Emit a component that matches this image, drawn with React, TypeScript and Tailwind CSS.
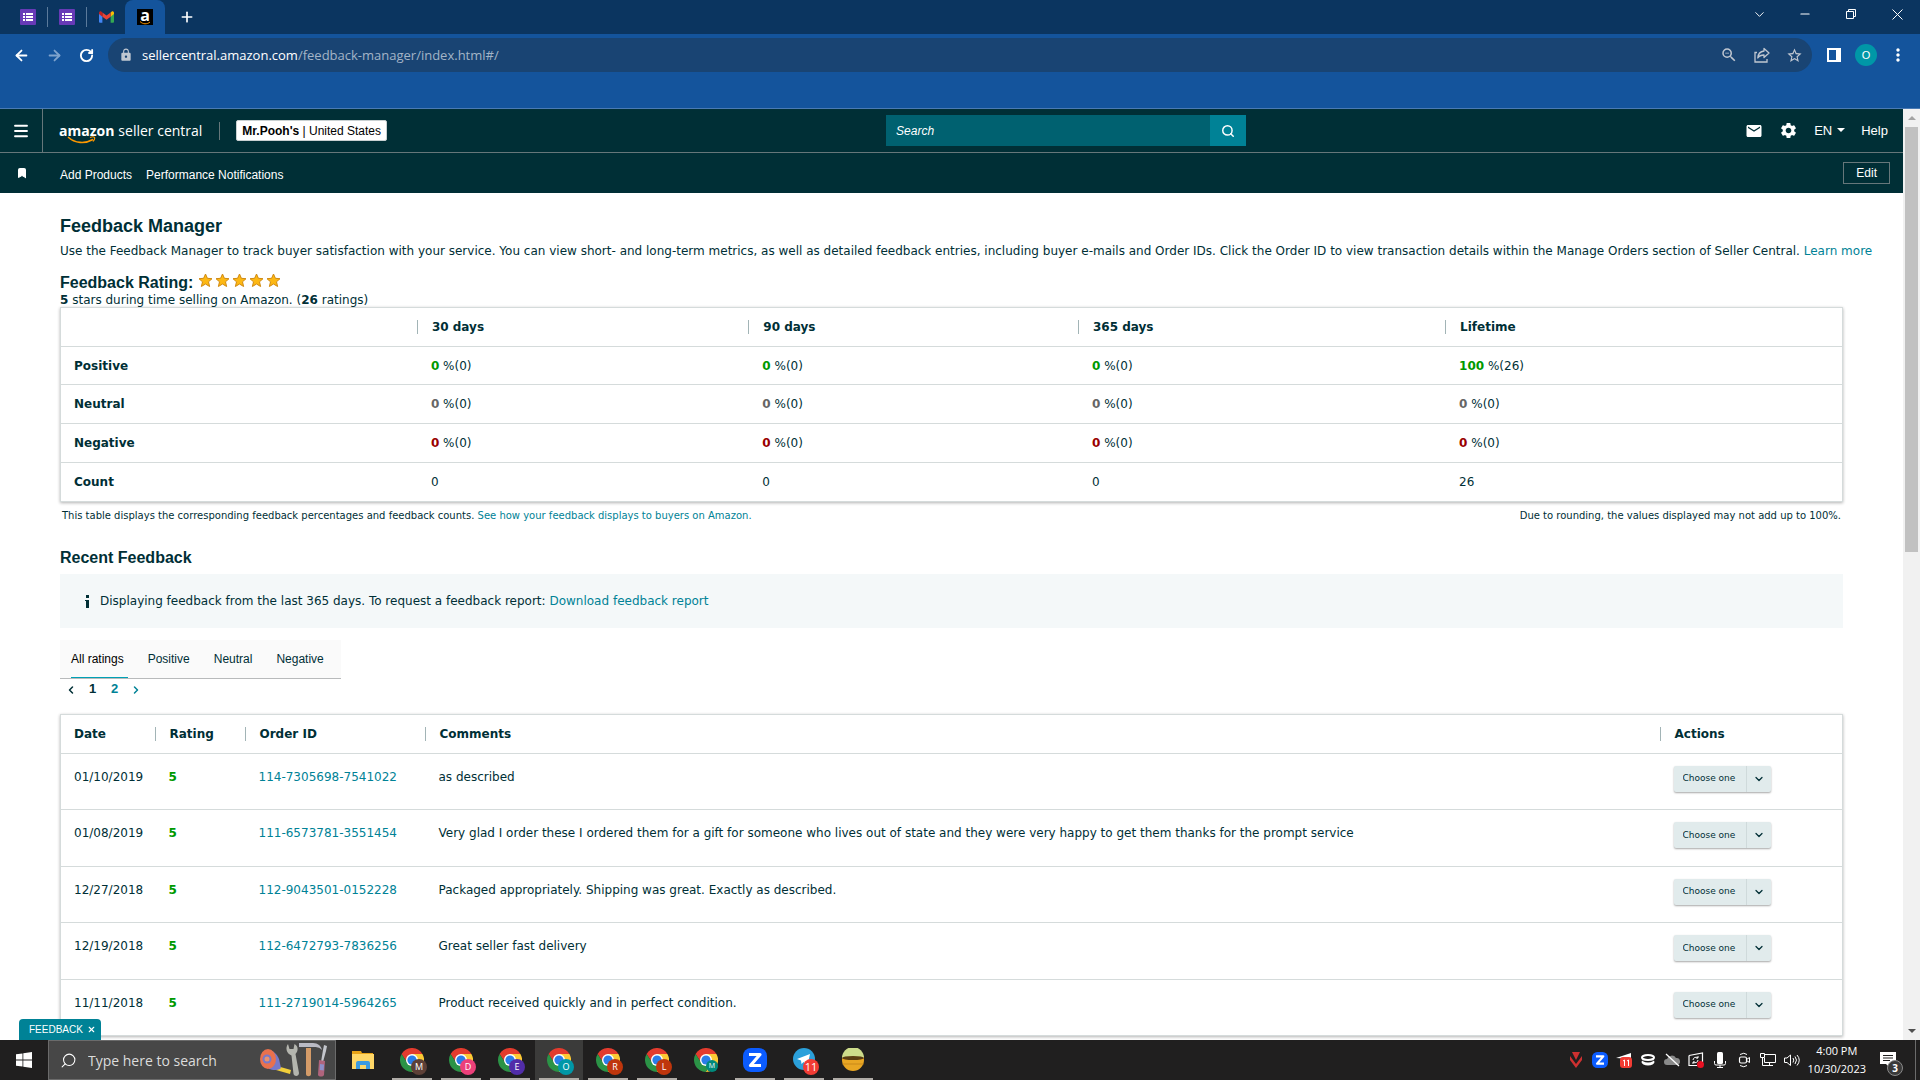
import { useState, type ReactNode } from "react";
import {
  ArrowLeft,
  ArrowRight,
  Bookmark,
  ChevronDown,
  ChevronLeft,
  ChevronRight,
  Menu,
  Minus,
  Plus,
  RotateCw,
  Search,
  X,
} from "lucide-react";
import { MdEmail, MdLock, MdMoreVert, MdSettings, MdStarBorder, MdZoomOut } from "react-icons/md";

interface RatingRow {
  label: string;
  color: string;
  values: [string, string][];
}

const PERIODS = ["30 days", "90 days", "365 days", "Lifetime"];

const RATING_ROWS: RatingRow[] = [
  {
    label: "Positive",
    color: "text-[#009900]",
    values: [["0", "0"], ["0", "0"], ["0", "0"], ["100", "26"]],
  },
  {
    label: "Neutral",
    color: "text-[#666666]",
    values: [["0", "0"], ["0", "0"], ["0", "0"], ["0", "0"]],
  },
  {
    label: "Negative",
    color: "text-[#990000]",
    values: [["0", "0"], ["0", "0"], ["0", "0"], ["0", "0"]],
  },
];

const COUNTS = ["0", "0", "0", "26"];

const FEEDBACK = [
  { date: "01/10/2019", rating: 5, order: "114-7305698-7541022", comment: "as described" },
  {
    date: "01/08/2019",
    rating: 5,
    order: "111-6573781-3551454",
    comment:
      "Very glad I order these I ordered them for a gift for someone who lives out of state and they were very happy to get them thanks for the prompt service",
  },
  {
    date: "12/27/2018",
    rating: 5,
    order: "112-9043501-0152228",
    comment: "Packaged appropriately. Shipping was great. Exactly as described.",
  },
  { date: "12/19/2018", rating: 5, order: "112-6472793-7836256", comment: "Great seller fast delivery" },
  {
    date: "11/11/2018",
    rating: 5,
    order: "111-2719014-5964265",
    comment: "Product received quickly and in perfect condition.",
  },
];

const TABS = ["All ratings", "Positive", "Neutral", "Negative"];

const PROFILES = [
  { letter: "M", color: "bg-[#5d4037]" },
  { letter: "D", color: "bg-[#ec407a]" },
  { letter: "E", color: "bg-[#512da8]" },
  { letter: "O", color: "bg-[#0097a7]", active: true },
  { letter: "R", color: "bg-[#bf360c]" },
  { letter: "L", color: "bg-[#bf360c]" },
];

export default function App() {
  return (
    <div className="flex h-screen flex-col overflow-hidden bg-white font-['Liberation_Sans',Arial,sans-serif] text-[#002f36]">
      <TabStrip />
      <Toolbar />
      <div className="flex min-h-0 flex-1">
        <div className="relative flex min-w-0 flex-1 flex-col">
          <SellerHeader />
          <main className="min-h-0 flex-1 overflow-hidden px-[60px] pt-[21px] font-['DejaVu_Sans',Verdana,sans-serif] text-xs">
            <FeedbackSummary />
            <RecentFeedback />
          </main>
          <div className="absolute bottom-0 left-[19px] flex h-[21px] w-[82px] items-center justify-between rounded-t-[4px] bg-[#008296] pl-[10px] pr-[5px] text-[10px] text-white">
            <button>FEEDBACK</button>
            <button aria-label="Close">
              <X size={9} strokeWidth={3} />
            </button>
          </div>
        </div>
        <Scrollbar />
      </div>
      <Taskbar />
    </div>
  );
}

/* Browser chrome */

function TabStrip() {
  return (
    <div className="flex h-[34px] shrink-0 bg-[#0b3560] text-white">
      <div className="flex items-center pl-5">
        <FormsIcon />
        <span className="ml-[11px] h-5 w-px bg-[#5b7a9b]" />
        <span className="ml-[11px]">
          <FormsIcon />
        </span>
        <span className="ml-[11px] h-5 w-px bg-[#5b7a9b]" />
        <svg viewBox="0 0 16 12" className="ml-3 h-3 w-[15px]">
          <path d="M0 2v9a1 1 0 0 0 1 1h2.6V4.6z" fill="#4285f4" />
          <path d="M16 2v9a1 1 0 0 1-1 1h-2.6V4.6z" fill="#34a853" />
          <path d="M12.4 1.2v4.4L16 2.9V1.6C16 .2 14.4-.5 13.4.3z" fill="#fbbc04" />
          <path d="M3.6 1.2L8 4.500l4.4-3.300v4.400L8 8.900 3.600 5.600z" fill="#ea4335" />
          <path d="M0 1.600v1.300l3.600 2.700V1.200L2.600.3C1.600-.5 0 .2 0 1.600z" fill="#c5221f" />
        </svg>
      </div>
      <div className="ml-[11px] flex w-10 items-center justify-center rounded-t-lg bg-[#14549c]">
        <span className="flex size-4 flex-col items-center bg-black">
          <span className="font-['Open_Sans',sans-serif] text-base font-bold leading-3">a</span>
          <svg viewBox="0 0 12 4" className="h-1 w-3">
            <path d="M1 .5C4 3.5 8 3.5 11 1" stroke="#ff9900" fill="none" />
          </svg>
        </span>
      </div>
      <button className="ml-[14px]" aria-label="New tab">
        <Plus size={16} strokeWidth={2.5} />
      </button>
      <div className="ml-auto flex items-start">
        <WindowButton label="Search tabs">
          <ChevronDown size={15} strokeWidth={1.5} />
        </WindowButton>
        <WindowButton label="Minimize">
          <Minus size={14} strokeWidth={2} />
        </WindowButton>
        <WindowButton label="Restore">
          <svg viewBox="0 0 10 10" className="size-[10px]" fill="none" stroke="currentColor">
            <path d="M.5 2.5h7v7h-7zM2.5 2.5v-2h7v7h-2" />
          </svg>
        </WindowButton>
        <WindowButton label="Close">
          <svg viewBox="0 0 11 11" className="size-[11px]" stroke="currentColor">
            <path d="M.5.5l10 10M10.5.5l-10 10" />
          </svg>
        </WindowButton>
      </div>
    </div>
  );
}

function WindowButton({ label, children }: { label: string; children: ReactNode }) {
  return (
    <button aria-label={label} className="flex h-7 w-[46px] items-center justify-center">
      {children}
    </button>
  );
}

function FormsIcon() {
  return (
    <svg viewBox="0 0 16 16" className="size-4">
      <rect width="16" height="16" rx="1" fill="#673ab7" />
      <path d="M3 4h2v2H3zM6 4h7v2H6zM3 7h2v2H3zM6 7h7v2H6zM3 10h2v2H3zM6 10h7v2H6z" fill="#fff" />
    </svg>
  );
}

function Toolbar() {
  return (
    <div className="flex h-[75px] shrink-0 items-start border-b border-[#4a7ab3] bg-[#14549c] pt-1 text-white">
      <div className="flex h-[34px] w-[108px] items-center gap-4 pl-[13px]">
        <button aria-label="Back">
          <ArrowLeft size={17} strokeWidth={2.5} />
        </button>
        <button aria-label="Forward" className="text-[#7fa3cd]">
          <ArrowRight size={17} strokeWidth={2.5} />
        </button>
        <button aria-label="Reload">
          <RotateCw size={15} strokeWidth={3} />
        </button>
      </div>
      <div className="flex h-[34px] flex-1 items-center rounded-full bg-[#194473] pl-[11px] pr-[9px] text-[#c0c7d1]">
        <MdLock size={14} />
        <div className="ml-[9px] flex flex-1 pt-px font-['Open_Sans',sans-serif] text-[13px]">
          <span className="text-white">sellercentral.amazon.com</span>
          <span className="text-[#a3b4c7]">/feedback-manager/index.html#/</span>
        </div>
        <div className="flex items-center gap-4">
          <MdZoomOut size={18} />
          <svg viewBox="0 0 16 16" className="size-4" fill="none" stroke="currentColor" strokeWidth="1.3">
            <path d="M3 5.5H1V15h12v-3" />
            <path d="M10 1.5L15 6l-5 4.5V8C7 8 5 9 3.800 11 4 7 6.500 4.500 10 4z" strokeLinejoin="round" />
          </svg>
          <MdStarBorder size={17} />
        </div>
      </div>
      <div className="flex h-[34px] w-[108px] items-center pl-[15px]">
        <span className="h-[14px] w-[14px] border-2 border-r-[5px] border-white" />
        <span className="ml-[14px] flex size-[22px] items-center justify-center rounded-full bg-[#0097a7] text-[11px]">
          O
        </span>
        <MdMoreVert size={20} className="ml-[11px]" />
      </div>
    </div>
  );
}

function Scrollbar() {
  return (
    <div className="flex w-[17px] shrink-0 flex-col items-center justify-between bg-[#f1f1f1]">
      <div className="flex w-full flex-col items-center">
        <svg viewBox="0 0 8 4" className="my-[7px] h-1 w-2">
          <path d="M4 0l4 4H0z" fill="#a3a3a3" />
        </svg>
        <span className="h-[425px] w-[13px] bg-[#c1c1c1]" />
      </div>
      <svg viewBox="0 0 8 4" className="my-[7px] h-1 w-2">
        <path d="M0 0h8L4 4z" fill="#505050" />
      </svg>
    </div>
  );
}

/* Seller Central */

function SellerHeader() {
  return (
    <header className="shrink-0 bg-[#002f36] text-xs text-white">
      <div className="flex h-11 items-center border-b border-[#66777a] pr-[15px]">
        <button
          className="flex h-full w-[43px] items-center justify-center border-r border-[#66777a]"
          aria-label="Menu"
        >
          <Menu size={18} strokeWidth={2.5} />
        </button>
        <a href="#" className="ml-4 flex font-['Open_Sans',sans-serif] text-sm leading-5">
          <span className="relative font-bold">
            amazon
            <svg viewBox="0 0 29 8" className="absolute left-2 top-[15px] h-2 w-[29px]" fill="none" stroke="#ff9900">
              <path d="M1 1C8 7.5 18 8 26 3.5" strokeWidth="1.6" />
              <path d="M23 1.5c2-.8 4-.8 4.500 0s-.3 2.500-1.500 4" strokeWidth="1.2" />
            </svg>
          </span>
          <span className="ml-1">seller central</span>
        </a>
        <span className="ml-[17px] h-[18px] w-px bg-[#66777a]" />
        <button className="ml-4 h-[21px] whitespace-nowrap rounded-[2px] border border-[#c8d0d1] bg-white px-[5px] text-black">
          <b>Mr.Pooh's</b> | United States
        </button>
        <form className="mx-auto flex h-[31px] w-[360px]" onSubmit={(e) => e.preventDefault()}>
          <input
            aria-label="Search"
            placeholder="Search"
            className="min-w-0 flex-1 bg-[#006170] px-[10px] italic text-white placeholder:text-white"
          />
          <button className="flex w-9 items-center justify-center bg-[#008296]" aria-label="Submit search">
            <Search size={14} strokeWidth={2.5} />
          </button>
        </form>
        <nav className="flex items-center">
          <a href="#" aria-label="Messages">
            <MdEmail size={18} />
          </a>
          <a href="#" aria-label="Settings" className="ml-4">
            <MdSettings size={19} />
          </a>
          <button className="ml-4 flex items-center text-[13px]">
            EN
            <svg viewBox="0 0 8 4" className="ml-[5px] h-1 w-2">
              <path d="M0 0h8L4 4z" fill="currentColor" />
            </svg>
          </button>
          <a href="#" className="ml-4 text-[13px]">
            Help
          </a>
        </nav>
      </div>
      <div className="flex h-10 items-center pl-4 pr-[13px]">
        <Bookmark size={12} fill="currentColor" />
        <nav className="ml-8 flex gap-[14px] pt-[3px]">
          <a href="#">Add Products</a>
          <a href="#">Performance Notifications</a>
        </nav>
        <button className="ml-auto h-[22px] border border-[#66777a] px-3">Edit</button>
      </div>
    </header>
  );
}

function Heading({ children }: { children: ReactNode }) {
  return (
    <h2 className="font-['Liberation_Sans',Arial,sans-serif] text-base font-bold leading-5">{children}</h2>
  );
}

function HeadCell({ label, first }: { label: string; first?: boolean }) {
  return (
    <th className="p-0 text-left font-bold">
      {first ? (
        <div className="pl-[13px]">{label}</div>
      ) : (
        <div className="border-l border-[#a2b4b6] pl-[14px] leading-[14px]">{label}</div>
      )}
    </th>
  );
}

const TABLE =
  "w-full table-fixed border-collapse border border-[#d5dbdb] shadow-[0_1px_3px_rgba(0,0,0,0.3)]";
const LINK = "text-[#008296]";

function FeedbackSummary() {
  return (
    <section>
      <h1 className="font-['Liberation_Sans',Arial,sans-serif] text-lg font-bold leading-6">Feedback Manager</h1>
      <p className="mt-[3px] whitespace-nowrap leading-5">
        Use the Feedback Manager to track buyer satisfaction with your service. You can view short- and long-term
        metrics, as well as detailed feedback entries, including buyer e-mails and Order IDs. Click the Order ID to view
        transaction details within the Manage Orders section of Seller Central.{" "}
        <a href="#" className={LINK}>
          Learn more
        </a>
      </p>
      <div className="mt-3 flex">
        <Heading>Feedback Rating:</Heading>
        <div className="ml-[5px] flex gap-0.5">
          {[1, 2, 3, 4, 5].map((n) => (
            <svg key={n} viewBox="0 0 15 15" className="size-[15px]">
              <path
                d="M7.5 1l1.900 4.300 4.600.4-3.500 3.100 1.100 4.700-4.100-2.500-4.100 2.500 1.100-4.700L1 5.700l4.600-.4z"
                fill="#fdb813"
                stroke="#d08a12"
                strokeLinejoin="round"
              />
            </svg>
          ))}
        </div>
      </div>
      <p className="leading-[14px]">
        <b>5</b> stars during time selling on Amazon. (<b>26</b> ratings)
      </p>

      <table className={TABLE}>
        <colgroup>
          <col className="w-[20%]" />
          <col className="w-[18.6%]" />
          <col className="w-[18.5%]" />
          <col className="w-[20.6%]" />
          <col />
        </colgroup>
        <thead>
          <tr className="h-[39px]">
            <td />
            {PERIODS.map((period) => (
              <HeadCell key={period} label={period} />
            ))}
          </tr>
        </thead>
        <tbody>
          {RATING_ROWS.map((row) => (
            <tr key={row.label} className="h-[39px] border-t border-[#d5dbdb] first:h-[38px]">
              <th className="pl-[13px] text-left">{row.label}</th>
              {row.values.map(([percent, count], i) => (
                <td key={i} className="pl-[14px]">
                  <b className={row.color}>{percent}</b> %({count})
                </td>
              ))}
            </tr>
          ))}
          <tr className="h-[39px] border-t border-[#d5dbdb]">
            <th className="pl-[13px] text-left">Count</th>
            {COUNTS.map((count, i) => (
              <td key={i} className="pl-[14px]">
                {count}
              </td>
            ))}
          </tr>
        </tbody>
      </table>
      <div className="mt-2 flex justify-between px-0.5 text-[10px] leading-3">
        <p>
          This table displays the corresponding feedback percentages and feedback counts.{" "}
          <a href="#" className={LINK}>
            See how your feedback displays to buyers on Amazon.
          </a>
        </p>
        <p>Due to rounding, the values displayed may not add up to 100%.</p>
      </div>
    </section>
  );
}

function RecentFeedback() {
  const [tab, setTab] = useState("All ratings");
  const [page, setPage] = useState(1);

  return (
    <section className="mt-[26px]">
      <Heading>Recent Feedback</Heading>
      <div className="mt-1.5 flex h-[54px] items-center bg-[#f4f8f9] pl-[25px]">
        <svg viewBox="0 0 5 13" className="h-[13px] w-[5px]">
          <path d="M1 0h3v3H1zM0 5h4v8H1V6H0z" fill="#002f36" />
        </svg>
        <p className="ml-[10px]">
          Displaying feedback from the last 365 days. To request a feedback report:{" "}
          <a href="#" className={LINK}>
            Download feedback report
          </a>
        </p>
      </div>

      <div className="mt-3 flex h-[39px] w-[281px] gap-5 border-b border-[#b8babb] bg-[#fafafa] pl-[11px] font-['Liberation_Sans',Arial,sans-serif]">
        {TABS.map((name) => (
          <button
            key={name}
            onClick={() => setTab(name)}
            className={`border-b pr-1 ${tab === name ? "border-[#00a1b5] text-black" : "border-transparent"}`}
          >
            {name}
          </button>
        ))}
      </div>
      <nav className="flex h-5 items-center gap-[9px] pl-[5px] font-['Liberation_Sans',Arial,sans-serif] text-[13px] font-bold">
        <button aria-label="Previous page" className="pt-0.5">
          <ChevronLeft size={12} strokeWidth={3} />
        </button>
        <button className="w-[13px]" onClick={() => setPage(1)} aria-current={page === 1}>
          1
        </button>
        <button className="w-[13px] text-[#008296]" onClick={() => setPage(2)} aria-current={page === 2}>
          2
        </button>
        <button aria-label="Next page" className="pt-0.5 text-[#008296]">
          <ChevronRight size={12} strokeWidth={3} />
        </button>
      </nav>

      <table className={`mt-[15px] ${TABLE}`}>
        <colgroup>
          <col className="w-[94px]" />
          <col className="w-[90px]" />
          <col className="w-[180px]" />
          <col />
          <col className="w-[183px]" />
        </colgroup>
        <thead>
          <tr className="h-[39px]">
            <HeadCell label="Date" first />
            <HeadCell label="Rating" />
            <HeadCell label="Order ID" />
            <HeadCell label="Comments" />
            <HeadCell label="Actions" />
          </tr>
        </thead>
        <tbody>
          {FEEDBACK.map((item) => (
            <tr key={item.order} className="border-t border-[#d5dbdb] odd:h-[56px] even:h-[57px]">
              <td className="pb-2.5 pl-[13px]">{item.date}</td>
              <td className="pb-2.5 pl-[14px] font-bold text-[#009900]">{item.rating}</td>
              <td className="pb-2.5 pl-[14px]">
                <a href="#" className={LINK}>
                  {item.order}
                </a>
              </td>
              <td className="pb-2.5 pl-[14px]">{item.comment}</td>
              <td className="pb-1.5 pl-[14px]">
                <ActionSelect order={item.order} />
              </td>
            </tr>
          ))}
        </tbody>
      </table>
    </section>
  );
}

function ActionSelect({ order }: { order: string }) {
  return (
    <div className="relative h-[26px] w-[97px] rounded-[2px] bg-[#e1ebec] shadow-[0_1px_2px_rgba(0,0,0,0.35)]">
      <select
        aria-label={`Action for order ${order}`}
        className="h-full w-full appearance-none pb-px pl-[9px] text-[9px]"
      >
        <option>Choose one</option>
      </select>
      <span className="pointer-events-none absolute inset-y-0 right-0 flex w-[25px] items-center justify-center border-l border-[#cfdadb]">
        <ChevronDown size={12} strokeWidth={2.5} />
      </span>
    </div>
  );
}

/* Windows taskbar */

function Taskbar() {
  return (
    <footer className="flex h-10 shrink-0 bg-[#201f1f] font-['Open_Sans',sans-serif] text-white">
      <button className="flex w-12 items-center justify-center" aria-label="Start">
        <svg viewBox="0 0 16 16" className="size-4" fill="currentColor">
          <path d="M0 2.300L6.500 1.400v6.200H0zM7.300 1.300L16 0v7.600H7.300zM0 8.400h6.500v6.200L0 13.700zM7.300 8.400H16V16l-8.700-1.300z" />
        </svg>
      </button>
      <div className="flex w-[288px] items-center border border-[#6b6b6b] bg-[#474747] pl-[11px] pr-[7px]">
        <Search size={17} strokeWidth={1.5} className="-scale-x-100" />
        <input
          placeholder="Type here to search"
          aria-label="Type here to search"
          className="ml-[11px] h-8 min-w-0 flex-1 text-sm placeholder:text-[#dcdcdc]"
        />
        <ToolsArt />
      </div>
      <div className="ml-[3px] flex gap-px">
        <TaskButton label="File Explorer">
          <svg viewBox="0 0 22 18" className="h-[18px] w-[22px]">
            <path d="M0 0h9l1 2h11v3H0z" fill="#e8a317" />
            <path d="M0 3h22v15H0z" fill="#ffd767" />
            <path d="M4 18v-6a2 2 0 0 1 2-2h10a2 2 0 0 1 2 2v6h-4v-4H8v4z" fill="#3d9be0" />
          </svg>
        </TaskButton>
        {PROFILES.map((p) => (
          <TaskButton key={p.letter} label={`Chrome ${p.letter}`} open active={p.active}>
            <ChromeIcon />
            <span
              className={`absolute bottom-[5px] right-[9px] flex size-4 items-center justify-center rounded-full text-[9px] ${p.color}`}
            >
              {p.letter}
            </span>
          </TaskButton>
        ))}
        <TaskButton label="Chrome">
          <ChromeIcon />
          <span className="absolute bottom-2 right-3 flex size-3 items-center justify-center rounded-full bg-[#00897b] text-[7px]">
            M
          </span>
        </TaskButton>
        <TaskButton label="Zoom" open>
          <ZoomIcon className="size-6" />
        </TaskButton>
        <TaskButton label="Telegram" open>
          <svg viewBox="0 0 24 24" className="size-6">
            <circle cx="12" cy="11" r="11" fill="#2ba0da" />
            <path d="M5 11l13-5-2.500 11-4-3-2 2-.5-3.500z" fill="#fff" />
          </svg>
          <span className="absolute bottom-[5px] right-[9px] flex size-4 items-center justify-center rounded-full bg-[#f23c34] text-[11px]">
            11
          </span>
        </TaskButton>
        <TaskButton label="Burger" open>
          <svg viewBox="0 0 24 24" className="size-6">
            <circle cx="12" cy="12" r="11" fill="#e8a623" />
            <path d="M1 10a11 11 0 0 1 22 0z" fill="#cddc8b" />
            <ellipse cx="12" cy="10" rx="11" ry="2" fill="#5a3d12" />
            <path d="M1.500 16h21" stroke="#c8881a" />
          </svg>
        </TaskButton>
      </div>
      <Tray />
    </footer>
  );
}

interface TaskButtonProps {
  label: string;
  open?: boolean;
  active?: boolean;
  children: ReactNode;
}

function TaskButton({ label, open, active, children }: TaskButtonProps) {
  return (
    <button
      aria-label={label}
      className={`relative flex w-12 items-center justify-center ${active ? "bg-[#3b3b3a]" : ""}`}
    >
      {children}
      {open && <span className="absolute inset-x-1 bottom-0 h-0.5 bg-[#b0aca7]" />}
    </button>
  );
}

function ChromeIcon() {
  return (
    <svg viewBox="0 0 24 24" className="size-6">
      <path d="M22.400 6A12 12 0 0 0 1.600 6L7.200 14.800 12 6.500z" fill="#e33b2e" />
      <path d="M22.400 6H12l5 8.700L11.800 24A12 12 0 0 0 22.400 6z" fill="#fcc934" />
      <path d="M1.600 6l5.600 8.800h9.800L11.800 24A12 12 0 0 1 1.600 6z" fill="#2b9346" />
      <circle cx="12" cy="12" r="6" fill="#fff" />
      <circle cx="12" cy="12" r="4.600" fill="#2a7de9" />
    </svg>
  );
}

function ZoomIcon({ className }: { className: string }) {
  return (
    <svg viewBox="0 0 24 24" className={className}>
      <rect width="24" height="24" rx="8" fill="#0b5cff" />
      <path d="M6 6.500h11L7.500 17.500H18" fill="none" stroke="#fff" strokeWidth="3.200" strokeLinejoin="round" />
    </svg>
  );
}

function ToolsArt() {
  return (
    <svg viewBox="0 0 68 36" className="h-9 w-[68px]">
      {/* tape measure */}
      <path d="M17 24l14 4-1 4-14-4z" fill="#f2cf3a" />
      <path d="M8 8c5 0 9 4 11 9l2 9c-3 3-9 2-12 1z" fill="#7779c9" />
      <ellipse cx="8" cy="17" rx="8" ry="10" fill="#e9714d" />
      <circle cx="7" cy="17" r="4.500" fill="#7779c9" />
      <circle cx="7" cy="17" r="2.500" fill="#e9936f" />
      {/* wrench */}
      <path d="M28 2l1.500 5 4 0 1-5c4 2 4 7 1 10l3.500 19c0 3.500-4.500 4-5.500 1l-2-18.500c-5-2-6.500-7.500-3.500-11.500z" fill="#b4b5ae" />
      {/* hammer */}
      <path d="M46 6h5v26c0 3-5 3-5 0z" fill="#d49b68" />
      <path d="M39 1h14c5 0 8 3 9 7-3-3-5-3-9-3H39z" fill="#b9bac4" />
      {/* screwdriver */}
      <path d="M64 3l3 1-1 5-3 11h-2l2-12z" fill="#c4c6cc" />
      <path d="M59 18l6 1-1 14c-1 2-5 2-6 0z" fill="#b0647c" />
      <path d="M60 22l4 .5-.3 6-4-.5z" fill="#8e8fc9" />
    </svg>
  );
}

function Tray() {
  return (
    <div className="ml-auto flex items-center pr-1">
      <div className="flex items-center gap-2">
        <svg viewBox="0 0 16 16" className="size-4">
          <path d="M4 0h8l-4 8zM2 4l6 8 6-8v4l-6 8-6-8z" fill="#cf3030" />
        </svg>
        <ZoomIcon className="size-4" />
        <svg viewBox="0 0 16 16" className="size-4">
          <path d="M0 6l15-5v6z" fill="#fff" />
          <rect x="4" y="5" width="12" height="11" rx="3" fill="#f23c34" />
          <path d="M7 9l1.500-1v6M11 9l1.500-1v6" stroke="#fff" fill="none" />
        </svg>
        <svg viewBox="0 0 16 16" className="size-4">
          <ellipse cx="8" cy="10" rx="6.500" ry="3.500" fill="#fff" />
          <ellipse cx="8" cy="6.500" rx="7" ry="4" fill="#201f1f" />
          <ellipse cx="8" cy="5.500" rx="6" ry="2.500" fill="none" stroke="#fff" strokeWidth="2" />
        </svg>
        <svg viewBox="0 0 16 16" className="size-4">
          <path d="M3 13a3 3 0 0 1 0-6 5 5 0 0 1 9-1 3.500 3.500 0 0 1 1 7z" fill="#8a8a8a" />
          <path d="M2 2l13 12" stroke="#fff" strokeWidth="1.300" />
        </svg>
        <svg viewBox="0 0 16 16" className="size-4" fill="none" stroke="#fff">
          <path d="M1 3.500L14.500 1v9M1 3.500v10h8" strokeWidth="1.200" />
          <path d="M5 8a3 3 0 0 1 5-2M10 8a3 3 0 0 1-5 2M10 4v2H8M5 12v-2h2" />
          <circle cx="12.500" cy="12.500" r="3.500" fill="#e81123" stroke="none" />
        </svg>
        <svg viewBox="0 0 16 16" className="size-4">
          <rect x="5" y="0" width="6" height="12" rx="1.500" fill="#fff" />
          <path d="M2.500 9v2.500q0 1.500 1.500 1.500h8q1.500 0 1.500-1.500V9M8 13v2.500M5 15.500h6" stroke="#fff" fill="none" />
        </svg>
        <svg viewBox="0 0 16 16" className="size-4" fill="none" stroke="#fff">
          <rect x="3.500" y="5" width="7" height="6" rx="1.500" strokeWidth="1.200" />
          <path d="M10.500 7.500l3-2v5l-3-2M4 2.500q4-2.500 7 0M4 13.500q4 2.500 7 0" />
        </svg>
        <svg viewBox="0 0 16 16" className="size-4" fill="none" stroke="#fff">
          <path d="M5 2.500h10.500v8H4.500V6M9.500 10.500v3M6 13.500h7M.5 1.500h4v4h-4zM2.500 5.500v8H6" />
        </svg>
        <svg viewBox="0 0 16 16" className="size-4" fill="none" stroke="#fff">
          <path d="M.5 6v4.500H3l3.500 3V3L3 6zM9 6q1.500 2 0 4.500M11 4.500q3 3.500 0 7.500M13 3q4.500 5 0 10.500" />
        </svg>
      </div>
      <div className="ml-2 text-center text-[11px] leading-[18px]">
        <div>4:00 PM</div>
        <div>10/30/2023</div>
      </div>
      <button className="relative ml-[14px] h-10 w-9 border-r border-[#6b6b6b]" aria-label="Notifications, 3 new">
        <svg viewBox="0 0 16 16" className="size-4">
          <path d="M0 0h16v12h-6v4l-4-4H0z" fill="#fff" />
          <path d="M3 3.500h10M3 6h10M3 8.500h7" stroke="#201f1f" />
        </svg>
        <span className="absolute bottom-1 right-3 flex size-4 items-center justify-center rounded-full border border-[#8a8a8a] bg-[#3a3a3a] text-[10px] font-bold">
          3
        </span>
      </button>
    </div>
  );
}
